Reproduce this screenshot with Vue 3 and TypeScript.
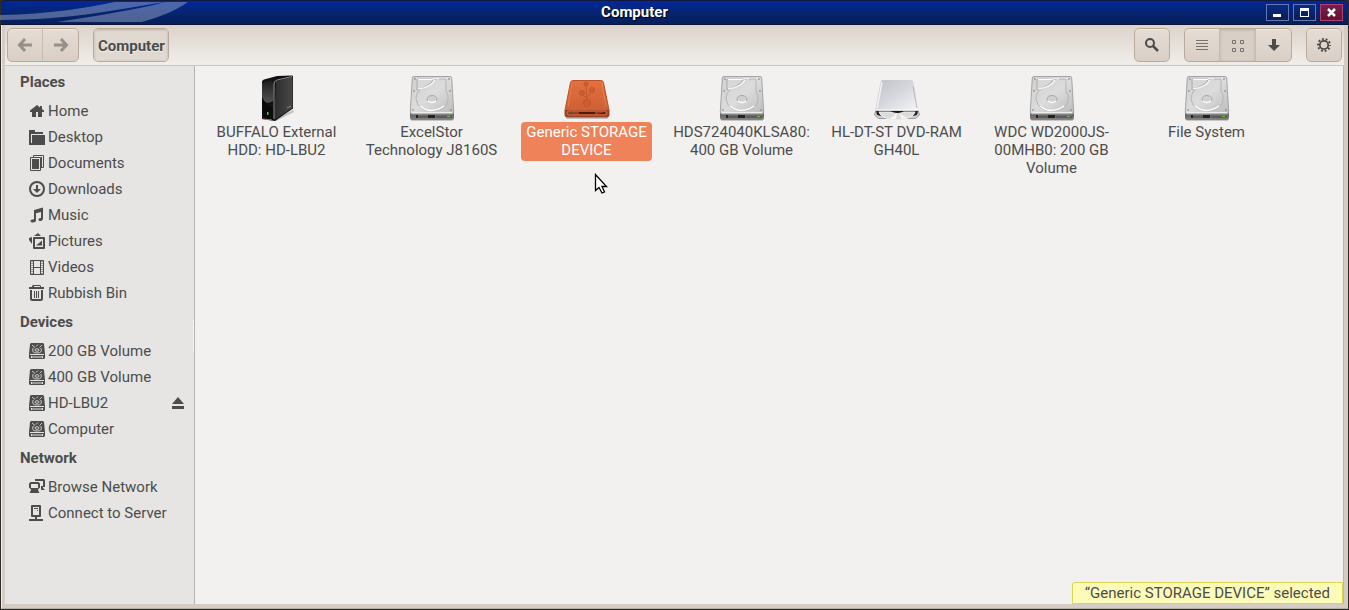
<script setup lang="ts">
import { ref } from 'vue'

interface Place { label: string; icon: string; eject?: boolean }
interface Section { title: string; items: Place[] }
interface Drive { id: number; lines: string[]; icon: string }

const sections: Section[] = [
  {
    title: 'Places',
    items: [
      { label: 'Home', icon: 'home' },
      { label: 'Desktop', icon: 'desktop' },
      { label: 'Documents', icon: 'documents' },
      { label: 'Downloads', icon: 'downloads' },
      { label: 'Music', icon: 'music' },
      { label: 'Pictures', icon: 'pictures' },
      { label: 'Videos', icon: 'videos' },
      { label: 'Rubbish Bin', icon: 'bin' },
    ],
  },
  {
    title: 'Devices',
    items: [
      { label: '200 GB Volume', icon: 'volume' },
      { label: '400 GB Volume', icon: 'volume' },
      { label: 'HD-LBU2', icon: 'volume', eject: true },
      { label: 'Computer', icon: 'volume' },
    ],
  },
  {
    title: 'Network',
    items: [
      { label: 'Browse Network', icon: 'network' },
      { label: 'Connect to Server', icon: 'server' },
    ],
  },
]

const drives: Drive[] = [
  { id: 1, lines: ['BUFFALO External', 'HDD: HD-LBU2'], icon: 'tower' },
  { id: 2, lines: ['ExcelStor', 'Technology J8160S'], icon: 'disk' },
  { id: 3, lines: ['Generic STORAGE', 'DEVICE'], icon: 'usb' },
  { id: 4, lines: ['HDS724040KLSA80:', '400 GB Volume'], icon: 'disk' },
  { id: 5, lines: ['HL-DT-ST DVD-RAM', 'GH40L'], icon: 'optical' },
  { id: 6, lines: ['WDC WD2000JS-', '00MHB0: 200 GB', 'Volume'], icon: 'disk' },
  { id: 7, lines: ['File System'], icon: 'disk' },
]

const selected = ref(3)
</script>

<template>
  <div class="window">
    <svg class="defs" aria-hidden="true">
      <defs>
        <linearGradient id="metal" x1="0" y1="0" x2="1" y2="1">
          <stop offset="0" stop-color="#cfcfcf" /><stop offset=".5" stop-color="#dcdcdc" /><stop offset="1" stop-color="#bcbcbc" />
        </linearGradient>
        <linearGradient id="front" x1="0" y1="0" x2="0" y2="1">
          <stop offset="0" stop-color="#555" /><stop offset="1" stop-color="#858585" />
        </linearGradient>
        <linearGradient id="orange" x1="0" y1="0" x2="0" y2="1">
          <stop offset="0" stop-color="#e5703f" /><stop offset="1" stop-color="#c95c33" />
        </linearGradient>
        <linearGradient id="silver" x1="0" y1="0" x2="1" y2="1">
          <stop offset="0" stop-color="#bfc0c8" /><stop offset=".5" stop-color="#d7d8de" /><stop offset="1" stop-color="#f5f5f7" />
        </linearGradient>
        <linearGradient id="black" x1="0" y1="0" x2="1" y2="0">
          <stop offset="0" stop-color="#2c2c2c" /><stop offset="1" stop-color="#484848" />
        </linearGradient>
        <linearGradient id="gloss" x1="0" y1="0" x2="0" y2="1">
          <stop offset="0" stop-color="#222" /><stop offset="1" stop-color="#777" />
        </linearGradient>
      </defs>

      <symbol id="home" viewBox="0 0 16 16"><path d="M8 2 1 7.500V9h2v5h4V9h2v5h4V9h2V7.500L13 6V3h-2v1.500z" /></symbol>
      <symbol id="desktop" viewBox="0 0 16 16"><path d="M0 1h6v2h8v2H2v9H0z" /><path d="M3 6h13v10H0V14h3z" /></symbol>
      <symbol id="documents" viewBox="0 0 16 16"><path d="M4.500 2.500v-2h10v12h-2M1.500 2.500h10v13h-10z" fill="none" stroke="currentColor" /><path d="M3 4h7v10H3zM12 2h1v11h-1z" /></symbol>
      <symbol id="downloads" viewBox="0 0 16 16"><circle cx="8" cy="8" r="7" fill="none" stroke="currentColor" stroke-width="2" /><path d="M7 4h2v4h3l-4 4-4-4h3z" /></symbol>
      <symbol id="music" viewBox="0 0 16 16"><path d="M5 3l9-2.500v11c0 1.500-1 2.500-2.600 2.500C8.500 14 9 10.500 12 11V5L7 6.300V13c0 1.700-1.200 2.500-3 2.500-3.600 0-3.300-3.500 1-3.300z" /></symbol>
      <symbol id="pictures" viewBox="0 0 16 16"><path d="M5 5h10v10H5z" fill="none" stroke="currentColor" stroke-width="2" stroke-linejoin="round" /><path d="M5 3l4-3 3 3zM3 4v7L0 7V5zM7 12.500l6-5v5z" /></symbol>
      <symbol id="videos" viewBox="0 0 16 16"><path d="M1.500 1.500h13v14h-13zM4.500 1v15M11.500 1v15M5 8.500h6" fill="none" stroke="currentColor" /><path d="M3 2v13M13 2v13" fill="none" stroke="currentColor" stroke-dasharray="1 1" /></symbol>
      <symbol id="bin" viewBox="0 0 16 16"><path d="M0 2h3V1l1-1h7l1 1v1h3v2H0zM5 1v1h6V1z" fill-rule="evenodd" /><path d="M2 5v8.500q0 1.500 1.500 1.500h8q1.500 0 1.500-1.500V5" fill="none" stroke="currentColor" stroke-width="2" /><path d="M5.500 6v7M7.500 6v7M9.500 6v7" stroke="currentColor" /></symbol>
      <symbol id="volume" viewBox="0 0 16 16"><path d="M2 0h12l1 1 1 10v4l-1 1H1l-1-1v-4L1 1z" /><path d="M1 11.500h14" stroke="#e6e5e3" /><path d="M2 13h12v2H2z" fill="#e6e5e3" /><path d="M3 13.500h10v1H3z" /><g fill="none" stroke="#dddcda" stroke-width=".9"><path d="M3 2l3 2.500M9 1.500l-2 2M13 2l-2.500 2.500M4.200 5Q2 10 8 10q6 0 3.800-5" /><ellipse cx="8" cy="7" rx="2" ry="1.300" /></g></symbol>
      <symbol id="network" viewBox="0 0 16 16"><path d="M6 0h9l1 1v7h-2V2H6z" /><path d="M1.500 3H9.500L11 4.500v4L9 10.500v.500l1.500 3h-10L2 11v-.500L0 8.500v-4zM2 5v4h7V5z" fill-rule="evenodd" /><path d="M12 7h2v2l2 2h-4z" /></symbol>
      <symbol id="server" viewBox="0 0 16 16"><path d="M3 1h8v10H3z" fill="none" stroke="currentColor" stroke-width="2" stroke-linejoin="round" /><path d="M6 12h2v2h6v2H0v-2h6zM5 3h4v1H5zM8 5h1v1H8z" /></symbol>
      <symbol id="eject" viewBox="0 0 16 16"><path d="M8 2l6 7H2zM2 11h12v3H2z" /></symbol>

      <symbol id="back" viewBox="0 0 16 16"><path d="M8 2 2.500 8 8 14M3 8h12" fill="none" stroke="currentColor" stroke-width="3" /></symbol>
      <symbol id="forward" viewBox="0 0 16 16"><path d="M8 2l5.500 6L8 14M13 8H1" fill="none" stroke="currentColor" stroke-width="3" /></symbol>
      <symbol id="search" viewBox="0 0 16 16"><circle cx="6" cy="6" r="4" fill="none" stroke="currentColor" stroke-width="2" /><path d="M9 9l5 5" stroke="currentColor" stroke-width="2.500" /></symbol>
      <symbol id="list" viewBox="0 0 16 16"><path d="M2 3h12v1H2zM2 6h12v1H2zM2 9h12v1H2zM2 12h12v1H2z" /></symbol>
      <symbol id="grid" viewBox="0 0 16 16"><path d="M2.500 3.500h3v3h-3zM10.500 3.500h3v3h-3zM2.500 11.500h3v3h-3zM10.500 11.500h3v3h-3z" fill="none" stroke="currentColor" /></symbol>
      <symbol id="down" viewBox="0 0 16 16"><path d="M6 2h4v6h4l-6 6-6-6h4z" /></symbol>
      <symbol id="gear" viewBox="0 0 16 16"><circle cx="8" cy="8" r="4.200" fill="none" stroke="currentColor" stroke-width="1.800" /><circle cx="8" cy="8" r="6" fill="none" stroke="currentColor" stroke-width="2" stroke-dasharray="1.885 1.885" stroke-dashoffset=".94" /></symbol>

      <symbol id="disk" viewBox="0 0 48 48">
        <rect x="3" y="44" width="42" height="3" rx="1" fill="#000" opacity=".18" />
        <path d="M2 38h44v6q0 2-2 2H4q-2 0-2-2z" fill="url(#front)" />
        <path d="M6 2.500h36q1.500 0 1.700 1.500l2 34q0 2-1.700 2H4q-1.700 0-1.700-2l2-34Q4.500 2.500 6 2.500z" fill="url(#metal)" stroke="#a4a4a4" />
        <path d="M8 4.500h32M44 38.500H4" stroke="#ededed" fill="none" />
        <path d="M31 5h7v12q3 4 2 10-2 10-16 10T8 25q0-7 6-11 10-3 14-9" fill="none" stroke="#b5b5b5" />
        <path d="M9 16V5h16q0 3-5 6-6 3-11 5z" fill="#d8d8d8" stroke="#aaa" />
        <path d="M10 5.500h15M10 15q13-2 17-9" fill="none" stroke="#fff" stroke-width="1.200" />
        <path d="M12 32q11 9 24 0" fill="none" stroke="#fff" stroke-width="1.500" />
        <ellipse cx="24" cy="25" rx="5" ry="3.500" fill="#d0d0d0" stroke="#aaa" />
        <path d="M20 27q4 3 8 0" fill="none" stroke="#fff" stroke-width="1.500" />
        <g fill="#777"><circle cx="7" cy="5" r=".8" /><circle cx="41" cy="5" r=".8" /><circle cx="6" cy="17" r=".8" /><circle cx="42" cy="17" r=".8" /><circle cx="5" cy="36" r=".8" /><circle cx="43" cy="36" r=".8" /></g>
        <path d="M8 41h2v3H8zM20 41h7v3h-7z" fill="#222" /><path d="M10 43h10M28 43h16" stroke="#444" /><path d="M39 42h3v1h-3z" fill="#62c92c" />
      </symbol>
      <symbol id="usb" viewBox="0 0 48 48">
        <rect x="3" y="42" width="42" height="3" rx="1" fill="#000" opacity=".2" />
        <path d="M10 6.500h28q2 0 2.500 2L46 36v5q0 2-2 2H4q-2 0-2-2v-5L7.500 8.500Q8 6.500 10 6.500z" fill="url(#orange)" stroke="#b9532d" />
        <path d="M2 36h44v5q0 2-2 2H4q-2 0-2-2z" fill="#98401f" />
        <rect x="4" y="37" width="40" height="4" rx="2" fill="none" stroke="#d86f45" /><path d="M16 38h16v2H16zM34 40l8-2v2z" fill="#4e1d0c" /><circle cx="8" cy="39" r="1.500" fill="#5b5730" />
        <path d="M9 9 5 33M39 9l4 24" stroke="#f08c5d" opacity=".6" />
        <g fill="#cd5e34" stroke="#bb532c" stroke-width=".8"><ellipse cx="24" cy="29" rx="3.500" ry="4" /><circle cx="19" cy="19" r="2.500" /><circle cx="23" cy="10" r="2" /><circle cx="29" cy="16" r="2.500" /><path d="M23 12l1 13M19 21l5 3M29 18l-5 5" fill="none" /></g>
      </symbol>
      <symbol id="optical" viewBox="0 0 48 48">
        <path d="M3 36h42l1.500 5-4 3.500H5.500l-4-3.500z" fill="#cfcfd1" stroke="#9a9a9e" />
        <path d="M3 37h42l-1 4-4 1H8l-4-1z" fill="#242426" />
        <path d="M6 38h36q-2 7-18 8Q8 45 6 38z" fill="#dbdbda" stroke="#eee" /><path d="M24 39l-7 6h6zM26 39l8 5-5 1z" fill="#f8f6f2" /><path d="M17 37h14q-6 4-14 0z" fill="#111" />
        <path d="M10 6h28q2 0 2.300 2L46 36H2L7.700 8Q8 6 10 6z" fill="url(#silver)" /><path d="M2.500 36h43" stroke="#fff" /><path d="M9 8 4 34" stroke="#f1f1f3" stroke-width="1.500" /><path d="M40 12l4 22" stroke="#b9b9c0" />
      </symbol>
      <symbol id="tower" viewBox="0 0 48 48">
        <path d="M20 47l20-11 1 2-18 9z" fill="#000" opacity=".2" />
        <path d="M9 8q0-2 2-2.500L24 2l15-.500q1 0 1 1v32L22 47 9 45z" fill="#111" />
        <path d="M23 7 39.500 3v31L21 46z" fill="url(#black)" />
        <path d="M9 9q7-4 13-2l-2 20Q12 32 9 23z" fill="url(#gloss)" opacity=".65" />
        <path d="M9 23q4 9 12 12v11L9 44z" fill="#0b0b0b" /><path d="M21 45V10q0-3 3-4l15-3.500" fill="none" stroke="#8b8b8b" />
        <path d="M14 38h1.500v3H14z" fill="#50c629" /><path d="M34 34l4-2" stroke="#888" /><path d="M10 45l9 1" stroke="#888" />
      </symbol>
    </svg>

    <header class="titlebar">
      <svg class="swoosh" viewBox="0 0 200 24" aria-hidden="true">
        <path d="M0 15C50 14 85 8 115 2h50C120 9 70 20 0 20z" />
        <path d="M57 22C95 16 135 10 165 2h23C175 11 160 17 142 22z" />
      </svg>
      <h1>Computer</h1>
      <div class="controls">
        <button type="button" aria-label="Minimise"><svg viewBox="0 0 21 15"><path d="M6 9h8v3H6z" /></svg></button>
        <button type="button" aria-label="Maximise"><svg viewBox="0 0 21 15"><path d="M6 3h9v9H6zM7 6v5h7V6z" fill-rule="evenodd" /></svg></button>
        <button type="button" class="close" aria-label="Close"><svg viewBox="0 0 21 15"><path d="M7 4l7 7M14 4l-7 7" fill="none" stroke="currentColor" stroke-width="2.500" /></svg></button>
      </div>
    </header>

    <div class="frame">
      <nav class="toolbar" aria-label="Toolbar">
        <div class="group">
          <button type="button" class="dim" aria-label="Back"><svg class="icon"><use href="#back" /></svg></button>
          <button type="button" class="dim" aria-label="Forward"><svg class="icon"><use href="#forward" /></svg></button>
        </div>
        <div class="group path"><button type="button" class="active">Computer</button></div>
        <div class="spacer"></div>
        <div class="group"><button type="button" aria-label="Search"><svg class="icon"><use href="#search" /></svg></button></div>
        <div class="group">
          <button type="button" aria-label="List view"><svg class="icon soft"><use href="#list" /></svg></button>
          <button type="button" class="active" aria-label="Icon view"><svg class="icon soft"><use href="#grid" /></svg></button>
          <button type="button" aria-label="View options"><svg class="icon"><use href="#down" /></svg></button>
        </div>
        <div class="group"><button type="button" aria-label="Settings"><svg class="icon"><use href="#gear" /></svg></button></div>
      </nav>

      <div class="body">
        <aside class="sidebar">
          <section v-for="section in sections" :key="section.title">
            <h2>{{ section.title }}</h2>
            <ul>
              <li v-for="item in section.items" :key="item.label">
                <a href="#" @click.prevent><svg class="icon"><use :href="'#' + item.icon" /></svg>{{ item.label }}</a>
                <button v-if="item.eject" type="button" class="eject" :aria-label="'Eject ' + item.label"><svg class="icon"><use href="#eject" /></svg></button>
              </li>
            </ul>
          </section>
          <div class="grip"></div>
        </aside>

        <main class="content">
          <div class="drives">
            <button v-for="drive in drives" :key="drive.id" type="button" class="drive" :class="{ selected: drive.id === selected }" @click="selected = drive.id">
              <svg class="picture"><use :href="'#' + drive.icon" /></svg>
              <span class="label"><span v-for="line in drive.lines" :key="line">{{ line }}</span></span>
              <svg v-if="drive.id === 3" class="pointer" viewBox="0 0 14 21"><path d="M1.500 1.500v16l3.500-3 3 5.500 2.500-1-2.500-5.500h4.500z" fill="#fff" stroke="#000" stroke-width="1.300" /></svg>
            </button>
          </div>
          <output class="status">“Generic STORAGE DEVICE” selected</output>
        </main>
      </div>
    </div>
  </div>
</template>

<style>
body { margin: 0; background: #2b2623; }
</style>

<style scoped>
* { box-sizing: border-box; }
.window {
  display: flex;
  flex-direction: column;
  min-height: 100vh;
  padding: 0 1px 1px;
  background: #302b28;
  color: #4c4c4c;
  font: 15px/18px Roboto, "Noto Sans", sans-serif;
}
.defs { position: absolute; width: 0; height: 0; }
svg { display: block; fill: currentColor; }
button { margin: 0; padding: 0; border: 0; background: none; color: inherit; font: inherit; }
.icon { width: 16px; height: 16px; flex: none; }
.titlebar {
  position: relative;
  display: flex;
  align-items: flex-start;
  justify-content: center;
  height: 25px;
  padding: 2px 80px 0 0;
  border-top: 1px solid #131a3c;
  border-bottom: 1px solid #0a1433;
  border-radius: 5px 5px 0 0;
  background: linear-gradient(#00289a, #06246e 55%, #061f5c);
  color: #fff;
}
.swoosh { position: absolute; left: -1px; top: -1px; width: 200px; height: 24px; fill: #a9b4d0; opacity: .45; }
h1 { margin: 0; font-size: 15px; line-height: 18px; font-weight: 700; text-shadow: 1px 1px 1px #000; }
.controls { position: absolute; right: 5px; top: 3px; display: flex; gap: 4px; }
.controls button { width: 23px; height: 17px; border: 1px solid #6478ad; background: linear-gradient(#0b2a83, #0a1c55); color: #fff; }
.controls .close { border-color: #b0426a; background: linear-gradient(#751f51, #65122f); }
.frame { flex: 1; display: flex; flex-direction: column; padding: 0 4px 4px 3px; background: #d5cdc4; border-left: 1px solid #f4efea; border-bottom: 1px solid #b5aea5; }
.toolbar {
  display: flex;
  gap: 14px;
  height: 41px;
  padding: 3px 2px 4px;
  border-bottom: 1px solid #d0c5bd;
  background: linear-gradient(#ddd3ca, #f1eeea);
}
.spacer { flex: 1; }
.group { display: flex; height: 34px; border: 1px solid #b9aa9c; border-radius: 5px; background: linear-gradient(#e5dcd4, #d9cfc6); overflow: hidden; box-shadow: inset 0 1px #eee8e2; }
.group button { display: flex; align-items: center; justify-content: center; min-width: 34px; }
.group button + button { width: 36px; border-left: 1px solid #c8bbb0; }
.group .active { background: #d8cfc6; box-shadow: inset 0 1px 3px #bcb0a5; }
.path .active { padding: 2px 3px 0 4px; font-weight: 700; background: #e0d9d2; text-shadow: 0 1px #f4efeb; }
.dim { color: #969089; }
.soft { color: #77736f; }
.body { flex: 1; display: flex; }
.sidebar { position: relative; width: 190px; background: #e6e5e3; border-right: 1px solid #b5b3b0; }
h2 { margin: 0; padding: 7px 15px; font-size: 15px; line-height: 18px; font-weight: 700; }
ul { list-style: none; margin: 0; padding: 0; }
li { display: flex; align-items: center; justify-content: space-between; height: 26px; padding: 0 8px 0 24px; }
a { display: flex; align-items: center; gap: 3px; color: inherit; text-decoration: none; }
.grip { position: absolute; right: 0; top: 254px; height: 32px; border-right: 1px dotted #fff; }
.content { flex: 1; display: flex; flex-direction: column; justify-content: space-between; background: #f2f1f0; border-right: 1px solid #bcb6ad; }
.drives { display: grid; grid-template-columns: repeat(auto-fill, 155px); padding: 8px 4px; align-items: start; }
.drive { position: relative; display: flex; flex-direction: column; align-items: center; }
.picture { width: 48px; height: 48px; }
.label { padding: 1px 5px 2px; border-radius: 4px; }
.label span { display: block; }
.selected .label { background: #f08259; color: #fff; }
.pointer { position: absolute; left: 85px; top: 99px; width: 14px; height: 21px; }
.status { align-self: flex-end; padding: 1px 11px; border: 1px solid #d8d74f; border-radius: 3px 0 0; background: #fdfbb8; }
.status { padding: 1px 12px; }
</style>
